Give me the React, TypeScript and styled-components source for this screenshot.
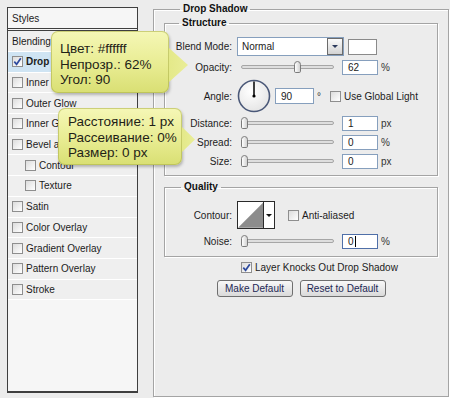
import React from "react";
import styled, { createGlobalStyle } from "styled-components";

const GlobalStyle = createGlobalStyle`
  html, body {
    margin: 0;
    padding: 0;
    background: #ececec;
  }
  body {
    font-family: "Liberation Sans", Arial, sans-serif;
    font-size: 10px;
    color: #1c1c1c;
  }
`;

const Page = styled.div`
  position: relative;
  width: 450px;
  height: 398px;
  overflow: hidden;
  display: flex;
  align-items: flex-start;
  padding-left: 7px;
  gap: 15px;
  box-sizing: border-box;
  background: #ececec;
`;

/* ---------- left styles list ---------- */

const StylesPanel = styled.div`
  margin-top: 7px;
  width: 131px;
  height: 386px;
  box-sizing: border-box;
  border: 1px solid #3f3f3f;
  border-bottom-width: 2px;
  background: #f4f4f4;
  display: flex;
  flex-direction: column;
`;

const PanelHeader = styled.div`
  height: 20px;
  display: flex;
  align-items: center;
  padding-left: 4px;
  border-bottom: 3px double #3f3f3f;
  background: #f6f6f6;
`;

const ListItem = styled.div<{ $selected?: boolean; $indent?: boolean; $bold?: boolean }>`
  height: 20.7px;
  box-sizing: border-box;
  display: flex;
  align-items: center;
  gap: 3px;
  padding-left: ${(p) => (p.$indent ? 17 : 4)}px;
  border-bottom: 1px solid #ffffff;
  background: ${(p) => (p.$selected ? "#cfe4f3" : "#efefef")};
  font-weight: ${(p) => (p.$bold ? "bold" : "normal")};
  white-space: nowrap;
  overflow: hidden;
`;

const ListRest = styled.div`
  flex: 1;
  background: #f6f6f6;
`;

/* ---------- shared controls ---------- */

const Box = styled.span<{ $focus?: boolean }>`
  display: inline-flex;
  align-items: center;
  justify-content: center;
  width: 11px;
  height: 11px;
  box-sizing: border-box;
  border: 1px solid #8e8e8e;
  background: linear-gradient(135deg, #dcdcdc, #ffffff);
  flex-shrink: 0;
`;

const Check: React.FC<{ checked?: boolean }> = ({ checked }) => (
  <Box>
    {checked && (
      <svg width="9" height="9" viewBox="0 0 9 9">
        <path d="M1.3 4.6 L3.6 7.3 L7.8 1.2" fill="none" stroke="#2d4a9e" strokeWidth="1.7" />
      </svg>
    )}
  </Box>
);

const Group = styled.fieldset<{ $gap?: number }>`
  margin: ${(p) => p.$gap ?? 0}px 0 0 0;
  padding: 0;
  border: 1px solid #a4a4a4;
  box-shadow: inset 1px 1px 0 #ffffff, 1px 1px 0 #ffffff;
  min-width: 0;
`;

const Legend = styled.legend<{ $offset: number }>`
  margin-left: ${(p) => p.$offset}px;
  padding: 0 3px;
  font-weight: bold;
  line-height: 12px;
  color: #111;
`;

const RightPanel = styled(Group)`
  margin-top: 3px;
  width: 296px;
  height: 394px;
  box-sizing: border-box;
  padding: 0 10px;
`;

const GroupBody = styled.div<{ $top: number; $bottom: number }>`
  padding: ${(p) => p.$top}px 0 ${(p) => p.$bottom}px 0;
  display: flex;
  flex-direction: column;
`;

const Row = styled.div<{ $h: number; $mt?: number }>`
  height: ${(p) => p.$h}px;
  margin-top: ${(p) => p.$mt ?? 0}px;
  display: flex;
  align-items: center;
`;

const Label = styled.span`
  width: 67px;
  margin-right: 5px;
  text-align: right;
  white-space: nowrap;
  color: #1c1c1c;
`;

const Field = styled.span<{ $w?: number; $h?: number; $ml?: number; $focus?: boolean }>`
  display: inline-flex;
  align-items: center;
  box-sizing: border-box;
  width: ${(p) => p.$w ?? 36}px;
  height: ${(p) => p.$h ?? 15}px;
  margin-left: ${(p) => p.$ml ?? 8}px;
  padding-left: 5px;
  border: 1px solid ${(p) => (p.$focus ? "#4f6fa8" : "#869fbd")};
  background: #ffffff;
  color: #1a1a1a;
`;

const Caret = styled.span`
  width: 1px;
  height: 11px;
  margin-left: 1px;
  background: #000;
`;

const Unit = styled.span`
  margin-left: 3px;
  color: #333;
`;

const Track = styled.div`
  position: relative;
  width: 93px;
  height: 14px;
  margin-left: 4px;
  display: flex;
  align-items: center;
`;

const Rail = styled.div`
  width: 100%;
  height: 4px;
  box-sizing: border-box;
  border: 1px solid #a6a6a6;
  border-radius: 3px;
  background: #dedede;
`;

const Thumb = styled.div`
  position: absolute;
  top: 1px;
  width: 7px;
  height: 12px;
  box-sizing: border-box;
  border: 1px solid #7b7b7b;
  border-radius: 4px 4px 2px 2px;
  background: linear-gradient(90deg, #ffffff, #d2d2d2);
`;

const Slider: React.FC<{ value: number }> = ({ value }) => (
  <Track>
    <Rail />
    <Thumb style={{ left: `${(value / 100) * 86}px` }} />
  </Track>
);

const Select = styled.div`
  width: 107px;
  height: 19px;
  box-sizing: border-box;
  border: 1px solid #869fbd;
  background: #ffffff;
  display: flex;
  align-items: center;
  justify-content: space-between;
  padding-left: 4px;
`;

const DropButton = styled.span`
  width: 16px;
  height: 17px;
  box-sizing: border-box;
  border: 1px solid #6b6b6b;
  background: linear-gradient(#fbfbfb, #d3d3d3);
  display: flex;
  align-items: center;
  justify-content: center;
  &::after {
    content: "";
    border-left: 3px solid transparent;
    border-right: 3px solid transparent;
    border-top: 3px solid #2c3a5c;
  }
`;

const Swatch = styled.span`
  width: 29px;
  height: 16px;
  margin-left: 4px;
  box-sizing: border-box;
  border: 1px solid #8a8a8a;
  background: #ffffff;
`;

const CheckLabel = styled.span<{ $ml?: number }>`
  display: inline-flex;
  align-items: center;
  gap: 3px;
  margin-left: ${(p) => p.$ml ?? 0}px;
  white-space: nowrap;
`;

const Contour = styled.span`
  display: flex;
  width: 38px;
  height: 28px;
  box-sizing: border-box;
  border: 1px solid #2a2a2a;
  background: #ffffff;
`;

const ContourArrow = styled.span`
  width: 10px;
  border-left: 1px solid #2a2a2a;
  display: flex;
  align-items: center;
  justify-content: center;
  &::after {
    content: "";
    border-left: 3px solid transparent;
    border-right: 3px solid transparent;
    border-top: 3px solid #111;
  }
`;

const KnockRow = styled.div`
  margin-top: 4px;
  height: 12px;
  padding-left: 77px;
  display: flex;
  align-items: center;
`;

const Buttons = styled.div`
  margin-top: 7px;
  display: flex;
  justify-content: center;
  gap: 7px;
`;

const Button = styled.button<{ $w: number }>`
  width: ${(p) => p.$w}px;
  height: 17px;
  padding: 0;
  border: 1px solid #6f6f6f;
  border-radius: 3px;
  background: linear-gradient(#f8f8f8, #dadada);
  font-family: "Liberation Sans", Arial, sans-serif;
  font-size: 10px;
  color: #1d2855;
`;

/* ---------- callouts over the dialog ---------- */

const Callout = styled.div<{ $x: number; $y: number; $w: number; $h: number; $ay: number; $ah: number; $aw: number; $pl: number; $pt: number }>`
  position: absolute;
  left: ${(p) => p.$x}px;
  top: ${(p) => p.$y}px;
  width: ${(p) => p.$w}px;
  height: ${(p) => p.$h}px;
  box-sizing: border-box;
  padding: ${(p) => p.$pt}px 0 0 ${(p) => p.$pl}px;
  border-radius: 7px;
  background: linear-gradient(#f5f7b6 0%, #e8ec92 55%, #d9df73 100%);
  box-shadow: inset 0 0 0 1px rgba(170, 175, 70, 0.55), 1px 2px 3px rgba(0, 0, 0, 0.25);
  font-size: 13.5px;
  line-height: 15.5px;
  color: #1f1f17;
  white-space: nowrap;
  &::after {
    content: "";
    position: absolute;
    left: 100%;
    top: ${(p) => p.$ay}px;
    width: ${(p) => p.$aw}px;
    height: ${(p) => p.$ah}px;
    background: linear-gradient(90deg, #e4e989, #e9ed98);
    clip-path: polygon(0 0, 100% 50%, 0 100%);
  }
`;

const layerStyles = [
  { name: "Drop Shadow", checked: true, selected: true },
  { name: "Inner Shadow" },
  { name: "Outer Glow" },
  { name: "Inner Glow" },
  { name: "Bevel and Emboss" },
  { name: "Contour", indent: true },
  { name: "Texture", indent: true },
  { name: "Satin" },
  { name: "Color Overlay" },
  { name: "Gradient Overlay" },
  { name: "Pattern Overlay" },
  { name: "Stroke" },
];

const App: React.FC = () => (
  <Page>
    <GlobalStyle />

    <StylesPanel>
      <PanelHeader>Styles</PanelHeader>
      <ListItem style={{ height: 21 }}>Blending Options: Default</ListItem>
      {layerStyles.map((s) => (
        <ListItem key={s.name} $selected={s.selected} $indent={s.indent} $bold={s.selected}>
          <Check checked={s.checked} />
          {s.name}
        </ListItem>
      ))}
      <ListRest />
    </StylesPanel>

    <RightPanel>
      <Legend $offset={16}>Drop Shadow</Legend>

      <Group $gap={2}>
        <Legend $offset={14}>Structure</Legend>
        <GroupBody $top={8} $bottom={7}>
          <Row $h={19}>
            <Label>Blend Mode:</Label>
            <Select>
              Normal
              <DropButton />
            </Select>
            <Swatch />
          </Row>
          <Row $h={14} $mt={4}>
            <Label>Opacity:</Label>
            <Slider value={62} />
            <Field>62</Field>
            <Unit>%</Unit>
          </Row>
          <Row $h={34} $mt={5}>
            <Label>Angle:</Label>
            <svg width="34" height="34" viewBox="0 0 34 34">
              <defs>
                <radialGradient id="dial" cx="40%" cy="35%" r="70%">
                  <stop offset="0%" stopColor="#ffffff" />
                  <stop offset="100%" stopColor="#e4e4e4" />
                </radialGradient>
              </defs>
              <circle cx="17" cy="17" r="15.5" fill="url(#dial)" stroke="#4a5878" strokeWidth="1.6" />
              <line x1="17" y1="17" x2="17" y2="2.5" stroke="#000" strokeWidth="1.5" />
              <circle cx="17" cy="17" r="1.6" fill="#000" />
            </svg>
            <Field $w={39} $h={16} $ml={4}>90</Field>
            <Unit>°</Unit>
            <CheckLabel $ml={9}>
              <Check />
              Use Global Light
            </CheckLabel>
          </Row>
          <Row $h={14} $mt={3}>
            <Label>Distance:</Label>
            <Slider value={0} />
            <Field>1</Field>
            <Unit>px</Unit>
          </Row>
          <Row $h={14} $mt={5}>
            <Label>Spread:</Label>
            <Slider value={0} />
            <Field>0</Field>
            <Unit>%</Unit>
          </Row>
          <Row $h={14} $mt={5}>
            <Label>Size:</Label>
            <Slider value={0} />
            <Field>0</Field>
            <Unit>px</Unit>
          </Row>
        </GroupBody>
      </Group>

      <Group $gap={5}>
        <Legend $offset={16}>Quality</Legend>
        <GroupBody $top={8} $bottom={8}>
          <Row $h={28}>
            <Label>Contour:</Label>
            <Contour>
              <svg width="26" height="26" viewBox="0 0 26 26">
                <polygon points="0,26 26,0 26,26" fill="#8c8c8c" />
              </svg>
              <ContourArrow />
            </Contour>
            <CheckLabel $ml={13}>
              <Check />
              Anti-aliased
            </CheckLabel>
          </Row>
          <Row $h={14} $mt={5}>
            <Label>Noise:</Label>
            <Slider value={0} />
            <Field $focus>
              0<Caret />
            </Field>
            <Unit>%</Unit>
          </Row>
        </GroupBody>
      </Group>

      <KnockRow>
        <CheckLabel>
          <Check checked />
          Layer Knocks Out Drop Shadow
        </CheckLabel>
      </KnockRow>

      <Buttons>
        <Button $w={76}>Make Default</Button>
        <Button $w={86}>Reset to Default</Button>
      </Buttons>
    </RightPanel>

    <Callout $x={51} $y={31} $w={118} $h={62} $ay={17} $ah={34} $aw={19} $pl={9} $pt={10}>
      Цвет: #ffffff
      <br />
      Непрозр.: 62%
      <br />
      Угол: 90
    </Callout>

    <Callout $x={58} $y={108} $w={124} $h={57} $ay={19} $ah={25} $aw={13} $pl={10} $pt={6}>
      Расстояние: 1 px
      <br />
      Рассеивание: 0%
      <br />
      Размер: 0 px
    </Callout>
  </Page>
);

export default App;
